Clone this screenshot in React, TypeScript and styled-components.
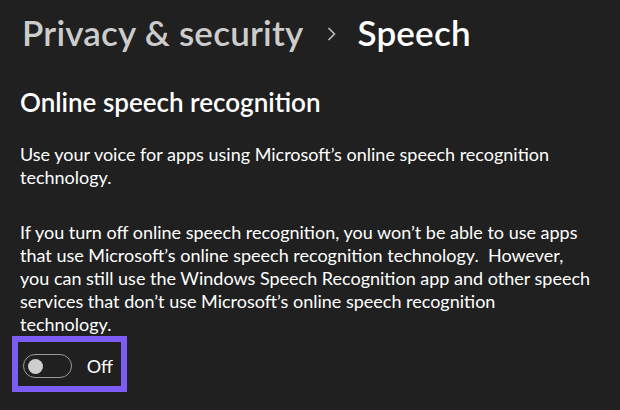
import React from "react";
import styled, { createGlobalStyle } from "styled-components";

const Global = createGlobalStyle`
  html, body { margin: 0; padding: 0; background: #202020; }
  body { font-family: Lato, "Noto Sans", sans-serif; color: #ffffff; }
`;

const Page = styled.div`
  width: 620px;
  height: 410px;
  box-sizing: border-box;
  padding: 8px 0 0 20px;
  background: #202020;
  display: flex;
  flex-direction: column;
  overflow: hidden;
`;

const Breadcrumb = styled.div`
  display: flex;
  align-items: center;
  padding-left: 2px;
  height: 48px;
  font-size: 35px;
  font-weight: 600;
  line-height: 48px;
  letter-spacing: 0.2px;
`;

const Crumb = styled.span<{ $current?: boolean }>`
  color: ${(p) => (p.$current ? "#ffffff" : "#cccccc")};
`;

const Chevron = styled.svg`
  width: 12px;
  height: 16px;
  margin: 4px 19px 0 23px;
`;

const Heading = styled.h2`
  margin: 30px 0 0 0;
  font-size: 26px;
  font-weight: 600;
  line-height: 32px;
`;

const Para = styled.p<{ $gap: number }>`
  margin: ${(p) => p.$gap}px 0 0 0;
  width: 590px;
  white-space: nowrap;
  font-size: 18px;
  line-height: 23px;
  color: #ffffff;
`;

const Highlight = styled.div`
  align-self: flex-start;
  margin: 0 0 0 -8px;
  box-sizing: border-box;
  width: 115px;
  height: 56px;
  border: 6px solid #7b5cf5;
  padding: 12px 8px 8px 5px;
  display: flex;
  align-items: center;
  gap: 15px;
`;

const Track = styled.div`
  box-sizing: border-box;
  width: 50px;
  height: 24px;
  border: 1.3px solid #9a9a9a;
  border-radius: 12px;
  display: flex;
  align-items: center;
  padding-left: 3.5px;
`;

const Knob = styled.div`
  width: 15px;
  height: 15px;
  border-radius: 50%;
  background: #cecece;
`;

const ToggleLabel = styled.span`
  font-size: 18px;
  line-height: 24px;
  color: #ffffff;
`;

export default function App() {
  return (
    <>
      <Global />
      <Page>
        <Breadcrumb>
          <Crumb>Privacy &amp; security</Crumb>
          <Chevron viewBox="0 0 12 16">
            <path d="M3 2.5 L8.5 8 L3 13.5" fill="none" stroke="#bdbdbd" strokeWidth="1.7" strokeLinecap="round" strokeLinejoin="round" />
          </Chevron>
          <Crumb $current>Speech</Crumb>
        </Breadcrumb>
        <Heading>Online speech recognition</Heading>
        <Para $gap={25}>
          Use your voice for apps using Microsoft’s online speech recognition
          <br />
          technology.
        </Para>
        <Para $gap={32}>
          If you turn off online speech recognition, you won’t be able to use apps
          <br />
          that use Microsoft’s online speech recognition technology.&nbsp; However,
          <br />
          you can still use the Windows Speech Recognition app and other speech
          <br />
          services that don’t use Microsoft’s online speech recognition
          <br />
          technology.
        </Para>
        <Highlight>
          <Track>
            <Knob />
          </Track>
          <ToggleLabel>Off</ToggleLabel>
        </Highlight>
      </Page>
    </>
  );
}
